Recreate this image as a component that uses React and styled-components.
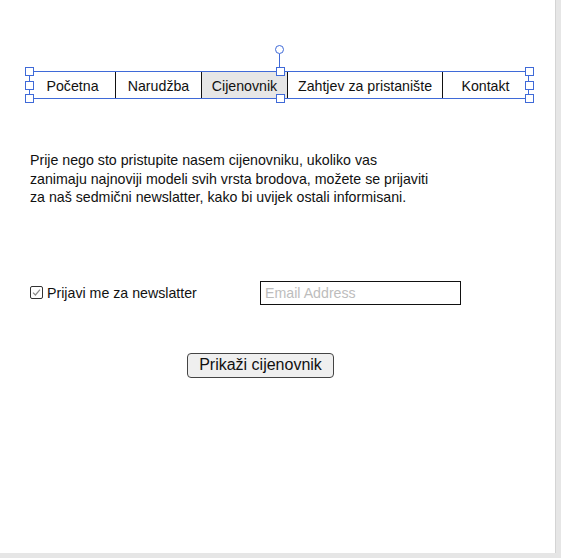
import React, { useState } from "react";
import styled, { createGlobalStyle } from "styled-components";

const GlobalStyle = createGlobalStyle`
    html, body {
        margin: 0;
        padding: 0;
        background: #e6e6e6;
        font-family: "Liberation Sans", Arial, sans-serif;
    }
`

const Page = styled.div`
    width: 556px;
    height: 553px;
    box-sizing: border-box;
    background: #ffffff;
    border-right: 1px solid #d4d4d4;
    padding: 71px 0 0 29px;
    color: #111;
`

const NavWrap = styled.div`
    position: relative;
    width: 500px;
`

const Nav = styled.nav`
    display: flex;
    height: 28px;
    box-sizing: border-box;
    border: 1px solid #3f6ad8;
`

const NavItem = styled.div`
    width: ${p => p.width}px;
    display: flex;
    align-items: center;
    justify-content: center;
    padding-top: 1px;
    font-size: 14.2px;
    background: ${p => (p.active ? "#e6e6e6" : "transparent")};
    border-right: ${p => (p.last ? "none" : "1px solid #111")};
    box-sizing: border-box;
`

const Handle = styled.span`
    position: absolute;
    width: 7px;
    height: 7px;
    background: #fff;
    border: 1px solid #3f6ad8;
    left: ${p => p.x - 4}px;
    top: ${p => p.y - 4}px;
`

const RotateLine = styled.span`
    position: absolute;
    left: 250px;
    top: -17px;
    width: 1px;
    height: 14px;
    background: #3f6ad8;
`

const RotateKnob = styled.span`
    position: absolute;
    left: 246px;
    top: -26px;
    width: 7px;
    height: 7px;
    border-radius: 50%;
    background: #fff;
    border: 1px solid #3f6ad8;
`

const Intro = styled.p`
    margin: 52px 0 0 1px;
    width: 403px;
    font-size: 14.2px;
    line-height: 18.5px;
`

const FormRow = styled.div`
    display: flex;
    align-items: center;
    margin-top: 74px;
    padding-left: 1px;
`

const CheckLabel = styled.label`
    display: flex;
    align-items: center;
    gap: 4px;
    width: 230px;
    font-size: 14.2px;
    cursor: pointer;
`

const Box = styled.span`
    width: 13px;
    height: 13px;
    box-sizing: border-box;
    border: 1px solid #333;
    border-radius: 2px;
    display: flex;
    align-items: center;
    justify-content: center;
    background: #fff;
`

const EmailInput = styled.input`
    width: 201px;
    height: 24px;
    box-sizing: border-box;
    border: 1px solid #111;
    padding: 0 4px;
    font-family: "Liberation Sans", Arial, sans-serif;
    font-size: 14.2px;
    outline: none;

    &::placeholder {
        color: #bdbdbd;
    }
`

const ButtonRow = styled.div`
    margin-top: 48px;
    padding-left: 158px;
`

const ShowButton = styled.button`
    width: 147px;
    height: 25px;
    box-sizing: border-box;
    background: #efefef;
    border: 1px solid #444;
    border-radius: 4px;
    font-family: "Liberation Sans", Arial, sans-serif;
    font-size: 16px;
    color: #111;
    padding: 0;
`

const navItems = [
    { label: "Početna", width: 86 },
    { label: "Narudžba", width: 86 },
    { label: "Cijenovnik", width: 86, active: true },
    { label: "Zahtjev za pristanište", width: 155 },
    { label: "Kontakt", width: 85 },
]

// selection handles around the nav (relative to nav wrapper)
const handles = [
    [0, 0], [0, 14], [0, 27],
    [251, 0], [251, 27],
    [500, 0], [500, 14], [500, 27],
]

const App = () => {
    const [checked, setChecked] = useState(true)

    return (
        <>
            <GlobalStyle />
            <Page>
                <NavWrap>
                    <Nav>
                        {navItems.map((item, i) => (
                            <NavItem
                                key={item.label}
                                width={item.width}
                                active={item.active}
                                last={i === navItems.length - 1}
                            >
                                {item.label}
                            </NavItem>
                        ))}
                    </Nav>
                    <RotateLine />
                    <RotateKnob />
                    {handles.map(([x, y], i) => (
                        <Handle key={i} x={x} y={y} />
                    ))}
                </NavWrap>

                <Intro>
                    Prije nego sto pristupite nasem cijenovniku, ukoliko vas zanimaju najnoviji
                    modeli svih vrsta brodova, možete se prijaviti za naš sedmični newslatter,
                    kako bi uvijek ostali informisani.
                </Intro>

                <FormRow>
                    <CheckLabel onClick={() => setChecked(!checked)}>
                        <Box>
                            {checked && (
                                <svg width="9" height="9" viewBox="0 0 9 9">
                                    <path d="M1 4.6 L3.4 7 L8 1.6" fill="none" stroke="#8a8a8a" strokeWidth="1.2" />
                                </svg>
                            )}
                        </Box>
                        Prijavi me za newslatter
                    </CheckLabel>
                    <EmailInput type="email" placeholder="Email Address" />
                </FormRow>

                <ButtonRow>
                    <ShowButton>Prikaži cijenovnik</ShowButton>
                </ButtonRow>
            </Page>
        </>
    )
}

export default App;
